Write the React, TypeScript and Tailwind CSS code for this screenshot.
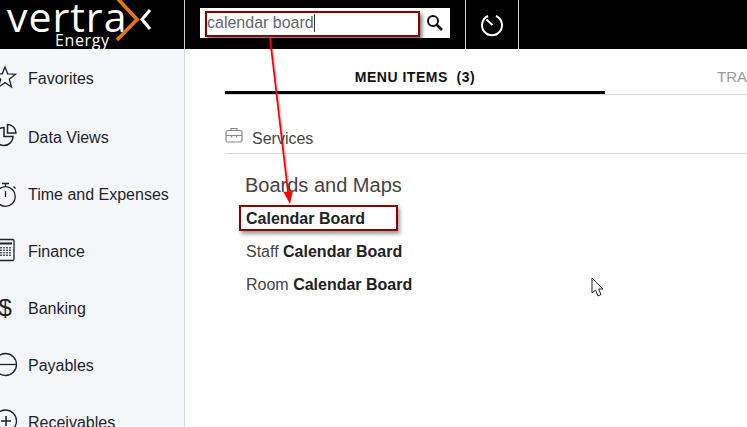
const sans = { fontFamily: '"Liberation Sans", Arial, sans-serif' };
const logoFont = { fontFamily: '"Open Sans", sans-serif' };

const menu = [
  { label: 'Favorites', icon: 'star' },
  { label: 'Data Views', icon: 'pie' },
  { label: 'Time and Expenses', icon: 'watch' },
  { label: 'Finance', icon: 'calc' },
  { label: 'Banking', icon: 'dollar' },
  { label: 'Payables', icon: 'minus' },
  { label: 'Receivables', icon: 'plus' },
];

function NavIcon({ name }: { name: string }) {
  return (
    <svg width="24" height="26" viewBox="0 0 24 26" fill="none" stroke="#1b2430" strokeWidth="1.300" className="shrink-0 overflow-visible">
      {name === 'star' && <path d="M5 1l2.700 6.800 7.800.4-6.200 5 2.200 7.800-6.500-4.400-6.500 4.400 2.200-7.800-6.200-5 7.800-.4z" />}
      {name === 'pie' && (
        <>
          <path d="M4 2.500a9 9 0 1 0 9 9H4z" strokeWidth="1.500" />
          <path d="M7.500 -0.500a8.500 8.500 0 0 1 8.500 8.500h-8.500z" strokeWidth="1.500" />
        </>
      )}
      {name === 'watch' && (
        <>
          <circle cx="5.500" cy="14.500" r="9.800" />
          <path d="M5.500 9v6M2 1.500h7M5.500 1.500v3.500M13.500 4.500l2 2" />
        </>
      )}
      {name === 'calc' && (
        <>
          <rect x="-4" y="0.500" width="18" height="21" rx="1.500" />
          <path d="M-2 4.500h14" strokeWidth="2" />
          <path d="M1 8v10M4 8v10M7 8v10M10 8v10" strokeDasharray="1.500 1" strokeWidth="1.500" />
        </>
      )}
      {name === 'minus' && (
        <>
          <circle cx="5.500" cy="11.500" r="11" />
          <path d="M-1 11.500h18" />
        </>
      )}
      {name === 'plus' && (
        <>
          <circle cx="5.500" cy="11" r="11" />
          <path d="M1 11h10M6 6v10" strokeWidth="1.600" />
        </>
      )}
      {name === 'dollar' && (
        <text x="-1.500" y="19.500" fontSize="24" fill="#1b2430" stroke="none" style={sans}>$</text>
      )}
    </svg>
  );
}

function Logo() {
  return (
    <div className="relative w-[184px] h-full shrink-0 border-r border-[#d0d0d0] box-content">
      <div className="flex flex-col items-start pl-[7px] pt-[2px]">
        <span className="text-[41px] leading-[28px] font-medium text-white tracking-[1px]" style={logoFont}>
          vertra
        </span>
        <span className="ml-[48px] mt-[1px] text-[16px] leading-[18px] font-medium text-white tracking-[0.6px]" style={logoFont}>
          Energy
        </span>
      </div>
      <svg width="44" height="42" viewBox="0 0 44 42" className="absolute left-[110px] top-0">
        <path d="M8 -1L27 19.500L7 40" fill="none" stroke="#e87511" strokeWidth="3.600" />
        <path d="M40 10L32 19.500L40 29" fill="none" stroke="#fff" strokeWidth="3.200" />
      </svg>
    </div>
  );
}

export default function App() {
  return (
    <div className="relative w-[747px] h-[427px] overflow-hidden bg-white" style={sans}>
      <header className="flex h-[49px] bg-black">
        <Logo />
        <div className="flex items-start pt-[8px] pl-[15px] w-[280px] shrink-0">
          <div className="flex items-center justify-between w-[250px] h-[30px] bg-white pl-[7px] pr-[5px]">
            <span className="text-[16px] text-[#5f6672] border-r border-[#333] leading-[18px] mt-[-1px]">calendar board</span>
            <svg width="20" height="20" viewBox="0 0 20 20" fill="none" stroke="#111">
              <circle cx="8" cy="8" r="5" strokeWidth="2" />
              <path d="M11.500 11.500L17 17" strokeWidth="2.600" />
            </svg>
          </div>
        </div>
        <div className="flex items-center justify-center w-[54px] h-full border-x border-[#d0d0d0] shrink-0">
          <svg width="24" height="24" viewBox="0 0 24 24" fill="none" stroke="#fff" strokeWidth="2">
            <path d="M8 3a10 10 0 1 0 8 0" />
            <path d="M6.500 6.500l6 5.500" />
          </svg>
        </div>
      </header>

      <div className="flex h-[378px]">
        <nav className="w-[185px] shrink-0 bg-[#f5f6f8] border-r border-[#d5d7da] flex flex-col pt-[17px] gap-[31px] overflow-hidden">
          {menu.map((item, i) => (
            <div key={item.label} className={i === 0 ? 'flex items-center h-[26px] text-[16px] text-[#1b2430] mb-[2px]' : 'flex items-center h-[26px] text-[16px] text-[#1b2430]'}>
              <NavIcon name={item.icon} />
              <span className="ml-[4px]">{item.label}</span>
            </div>
          ))}
        </nav>

        <main className="flex-1 pl-[40px] min-w-0">
          <div className="flex h-[46px] border-b border-[#d5d5d5] w-[600px]">
            <div className="w-[380px] shrink-0 h-[45px] border-b-[3px] border-black flex items-center justify-center pt-[14px] text-[14px] font-bold text-[#111] tracking-[0.5px] whitespace-pre">
              MENU ITEMS  (3)
            </div>
            <div className="flex-1 flex items-center pl-[112px] pt-[12px] text-[15px] text-[#999]">
              <span className="whitespace-nowrap">TRANSACTIONS</span>
            </div>
          </div>

          <div className="flex items-center h-[59px] pt-[30px] border-b border-[#d5d5d5] text-[16px] text-[#444] w-[600px]">
            <svg width="18" height="16" viewBox="0 0 18 16" fill="none" stroke="#888" strokeWidth="1.200" className="mt-[-8px]">
              <rect x="1" y="3.500" width="16" height="11.500" rx="1.500" />
              <path d="M6 3.500V1.500h6v2M1 8.500h16M6.500 8.500v2M11.500 8.500v2" />
            </svg>
            <span className="ml-[9px]">Services</span>
          </div>

          <div className="pl-[20px] pt-[19px]">
            <div className="text-[20px] leading-[24px] text-[#444]">Boards and Maps</div>
            <ul className="mt-[5px] text-[16px] leading-[33px] text-[#444] pl-[1px]">
              <li className="font-bold text-[#222]">Calendar Board</li>
              <li>Staff <b className="text-[#222]">Calendar Board</b></li>
              <li>Room <b className="text-[#222]">Calendar Board</b></li>
            </ul>
          </div>
        </main>
      </div>

      {/* callouts drawn over the page */}
      <div className="absolute left-[205px] top-[11px] w-[215px] h-[26px] border-[2px] border-[#8b0000] shadow-[2px_3px_4px_rgba(0,0,0,0.55)]" />
      <div className="absolute left-[239px] top-[205px] w-[159px] h-[26px] border-[2px] border-[#8b0000] shadow-[2px_3px_4px_rgba(0,0,0,0.4)]" />
      <svg width="747" height="427" className="absolute inset-0 pointer-events-none">
        <path d="M271.500 38L289.500 192" stroke="#000" strokeOpacity="0.18" strokeWidth="2" />
        <path d="M270 38L288 192" stroke="#ff0000" strokeWidth="1.800" />
        <path d="M283.500 192L293 191L290 204z" fill="#ff0000" />
      </svg>

      {/* mouse pointer */}
      <svg width="14" height="20" viewBox="0 0 14 20" className="absolute left-[591px] top-[277px]" fill="#fff" stroke="#222" strokeWidth="1">
        <path d="M1 1v15l3.500-3 2.500 6 3-1.500-2.500-5.500h4.500z" />
      </svg>
    </div>
  );
}
